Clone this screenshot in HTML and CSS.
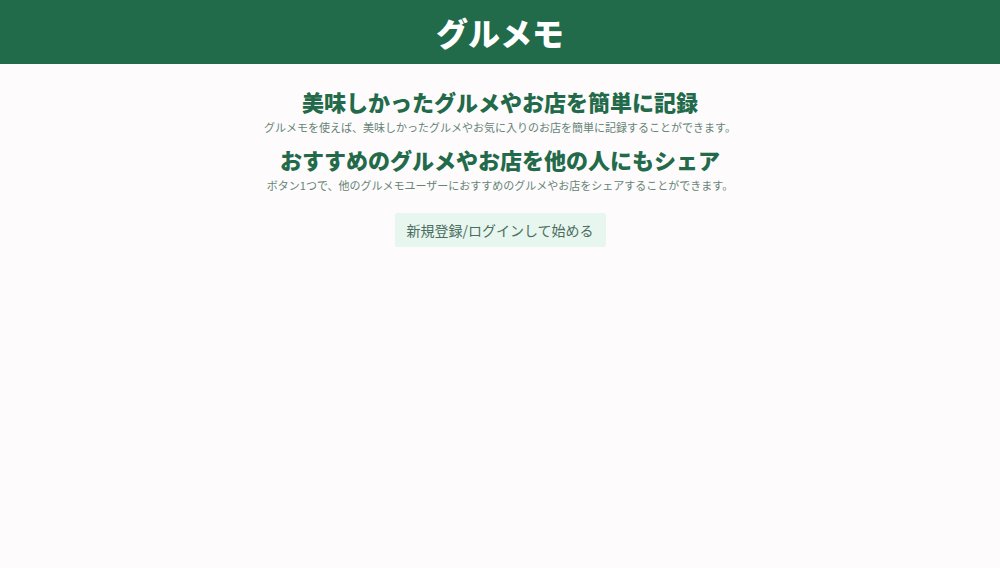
FILE: index.html
```html
<!DOCTYPE html>
<html lang="ja">
<head>
<meta charset="utf-8">
<title>グルメモ</title>
<link rel="stylesheet" href="styles.css">
</head>
<body>
<header class="site-header">
  <h1 class="logo">グルメモ</h1>
</header>
<main class="hero">
  <section class="feature">
    <h2 class="feature-title">美味しかったグルメやお店を簡単に記録</h2>
    <p class="feature-text">グルメモを使えば、美味しかったグルメやお気に入りのお店を簡単に記録することができます。</p>
  </section>
  <section class="feature">
    <h2 class="feature-title">おすすめのグルメやお店を他の人にもシェア</h2>
    <p class="feature-text">ボタン1つで、他のグルメモユーザーにおすすめのグルメやお店をシェアすることができます。</p>
  </section>
  <a class="start-btn" href="#">新規登録/ログインして始める</a>
</main>
</body>
</html>
```

FILE: styles.css
```css
* { box-sizing: border-box; }
html, body {
  margin: 0;
  padding: 0;
}
body {
  background: #fdfbfc;
  font-family: "Noto Sans CJK JP", "Noto Sans", sans-serif;
  min-height: 568px;
}
.site-header {
  background: #216b4a;
  height: 64px;
  display: flex;
  align-items: center;
  justify-content: center;
}
.logo {
  margin: 0;
  color: #ffffff;
  font-size: 32px;
  font-weight: 900;
  line-height: 1;
}
.hero {
  display: flex;
  flex-direction: column;
  align-items: center;
  padding-top: 23px;
}
.feature {
  display: flex;
  flex-direction: column;
  align-items: center;
  margin-bottom: 8px;
}
.feature-title {
  margin: 0 0 2px;
  color: #226a49;
  font-size: 22px;
  font-weight: 900;
  line-height: 28px;
}
.feature-text {
  margin: 0;
  color: #668476;
  font-size: 11px;
  line-height: 20px;
}
.start-btn {
  margin-top: 10px;
  display: inline-flex;
  align-items: center;
  justify-content: center;
  width: 211px;
  height: 34px;
  background: #e7f6ef;
  color: #4d6d5f;
  font-size: 14px;
  text-decoration: none;
  border-radius: 2px;
}
```
